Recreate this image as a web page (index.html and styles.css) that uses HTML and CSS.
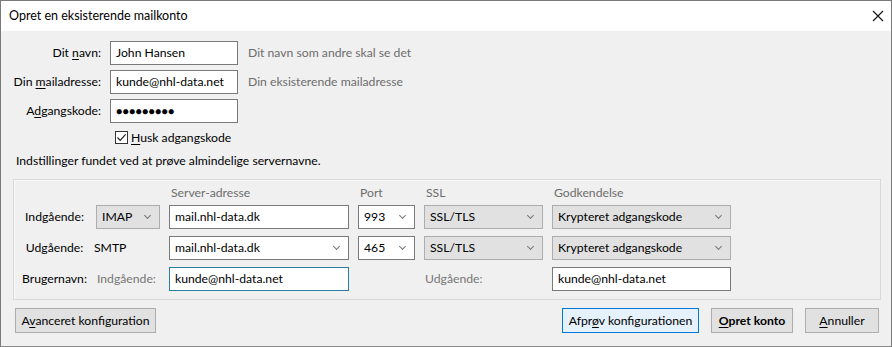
FILE: index.html
```html
<!DOCTYPE html>
<html lang="da">
<head>
  <meta charset="UTF-8" />
  <title>Opret en eksisterende mailkonto</title>
  <link rel="stylesheet" href="styles.css">
</head>
<body>
  <div class="window">
    <div class="titlebar">
      <span class="title">Opret en eksisterende mailkonto</span>
      <svg class="close" width="12" height="12" viewBox="0 0 12 12">
        <path d="M1 1 L11 11 M11 1 L1 11" stroke="#111" stroke-width="1.1" fill="none"/>
      </svg>
    </div>

    <div class="content">
      <div class="identity">
        <div class="label">Dit <u>n</u>avn:</div>
        <div class="field">John Hansen</div>
        <div class="hint">Dit navn som andre skal se det</div>

        <div class="label">Din <u>m</u>ailadresse:</div>
        <div class="field">kunde@nhl-data.net</div>
        <div class="hint">Din eksisterende mailadresse</div>

        <div class="label">A<u>d</u>gangskode:</div>
        <div class="field password">●●●●●●●●●</div>
        <div></div>
      </div>

      <div class="remember">
        <span class="checkbox">
          <svg width="11" height="11" viewBox="0 0 11 11">
            <path d="M1.5 5.5 L4.2 8.3 L9.6 2.4" stroke="#222" stroke-width="1.2" fill="none"/>
          </svg>
        </span>
        <span><u>H</u>usk adgangskode</span>
      </div>

      <div class="status">Indstillinger fundet ved at prøve almindelige servernavne.</div>

      <div class="groupbox">
        <div></div>
        <div></div>
        <div class="colhead">Server-adresse</div>
        <div class="colhead">Port</div>
        <div class="colhead">SSL</div>
        <div class="colhead">Godkendelse</div>

        <div class="rowlabel">Indgående:</div>
        <div class="dropdown">IMAP<span class="chev"></span></div>
        <div class="field">mail.nhl-data.dk</div>
        <div class="field combo">993<span class="chev"></span></div>
        <div class="dropdown">SSL/TLS<span class="chev"></span></div>
        <div class="dropdown">Krypteret adgangskode<span class="chev"></span></div>

        <div class="rowlabel">Udgående:</div>
        <div class="plain smtp">SMTP</div>
        <div class="field combo">mail.nhl-data.dk<span class="chev"></span></div>
        <div class="field combo">465<span class="chev"></span></div>
        <div class="dropdown">SSL/TLS<span class="chev"></span></div>
        <div class="dropdown">Krypteret adgangskode<span class="chev"></span></div>

        <div class="rowlabel">Brugernavn:</div>
        <div class="plain muted">Indgående:</div>
        <div class="field focused">kunde@nhl-data.net</div>
        <div></div>
        <div class="plain muted">Udgående:</div>
        <div class="field">kunde@nhl-data.net</div>
      </div>

      <div class="buttons">
        <button class="btn">A<u>v</u>anceret konfiguration</button>
        <div class="spacer"></div>
        <button class="btn default">Afpr<u>ø</u>v konfigurationen</button>
        <button class="btn strong"><u>O</u>pret konto</button>
        <button class="btn"><u>A</u>nnuller</button>
      </div>
    </div>
  </div>
</body>
</html>
```

FILE: styles.css
```css
* {
  box-sizing: border-box;
}

body {
  margin: 0;
  font-family: Lato, "Noto Sans", sans-serif;
  font-size: 12.2px;
  line-height: 16px;
  color: #000;
  background: #f0f0f0;
}

u {
  text-decoration-thickness: 1px;
  text-underline-offset: 2px;
}

.window {
  width: 892px;
  height: 347px;
  border: 1px solid #7a7a7a;
  border-bottom-color: #8a8a8a;
  background: #f0f0f0;
}

.titlebar {
  height: 30px;
  background: #fff;
  display: flex;
  align-items: center;
  justify-content: space-between;
  padding: 0 7px 0 8px;
}

.title {
  font-size: 12.5px;
}

.content {
  padding: 10px 12px 0 0;
}

/* identity fields */
.identity {
  display: grid;
  grid-template-columns: 100px 128px auto;
  grid-auto-rows: 24px;
  column-gap: 9px;
  row-gap: 5px;
}

.identity .hint {
  margin-left: 1px;
}

.label {
  text-align: right;
  align-self: center;
}

.hint {
  color: #6d6d6d;
  align-self: center;
}

.field {
  background: #fff;
  border: 1px solid #7a7a7a;
  padding: 3px 5px 0 5px;
  height: 24px;
  white-space: nowrap;
  overflow: hidden;
  position: relative;
}

.field.password {
  font-size: 10.5px;
  letter-spacing: 0.2px;
  padding-top: 3px;
  padding-left: 5px;
}

.field.focused {
  border-color: #2a7fa0;
}

.remember {
  display: flex;
  align-items: center;
  gap: 3px;
  margin: 8px 0 0 114px;
  height: 13px;
}

.checkbox {
  width: 13px;
  height: 13px;
  border: 1px solid #333;
  background: #fff;
  display: flex;
  align-items: center;
  justify-content: center;
}

.status {
  margin: 9px 0 0 15px;
}

/* server settings */
.groupbox {
  margin: 10px 0 0 12px;
  width: 868px;
  border: 1px solid #d8d8d8;
  box-shadow: inset 1px 1px 0 #fafafa;
  padding: 5px 0 8px 8px;
  display: grid;
  grid-template-columns: 65px 64px 180px 57px 119px 179px;
  grid-template-rows: 13px 24px 24px 24px;
  column-gap: 9px;
  row-gap: 7px;
}

.colhead {
  color: #6d6d6d;
  padding-left: 2px;
  align-self: start;
}

.rowlabel {
  text-align: center;
  align-self: center;
  white-space: nowrap;
}

.plain {
  align-self: center;
  padding-left: 1px;
}

.smtp {
  margin-left: -3px;
}

.muted {
  color: #777;
}

.dropdown {
  background: #e1e1e1;
  border: 1px solid #adadad;
  padding: 3px 5px 0 5px;
  height: 24px;
  position: relative;
  white-space: nowrap;
}

.chev {
  position: absolute;
  right: 9px;
  top: 7px;
  width: 5px;
  height: 5px;
  border-right: 1px solid #777;
  border-bottom: 1px solid #777;
  transform: rotate(45deg);
}

/* buttons */
.buttons {
  display: flex;
  gap: 12px;
  margin: 8px 0 0 14px;
}

.spacer {
  flex: 1;
}

.btn {
  font-family: inherit;
  font-size: 12.2px;
  line-height: 16px;
  height: 25px;
  padding: 0 4px;
  white-space: nowrap;
  background: #e1e1e1;
  border: 1px solid #adadad;
  color: #000;
}

.btn:first-child {
  width: 141px;
}

.btn.default {
  width: 137px;
  background: #e5f1fb;
  border-color: #0078d7;
}

.btn.strong {
  width: 82px;
  font-weight: bold;
}

.btn:last-child {
  width: 74px;
}
```
